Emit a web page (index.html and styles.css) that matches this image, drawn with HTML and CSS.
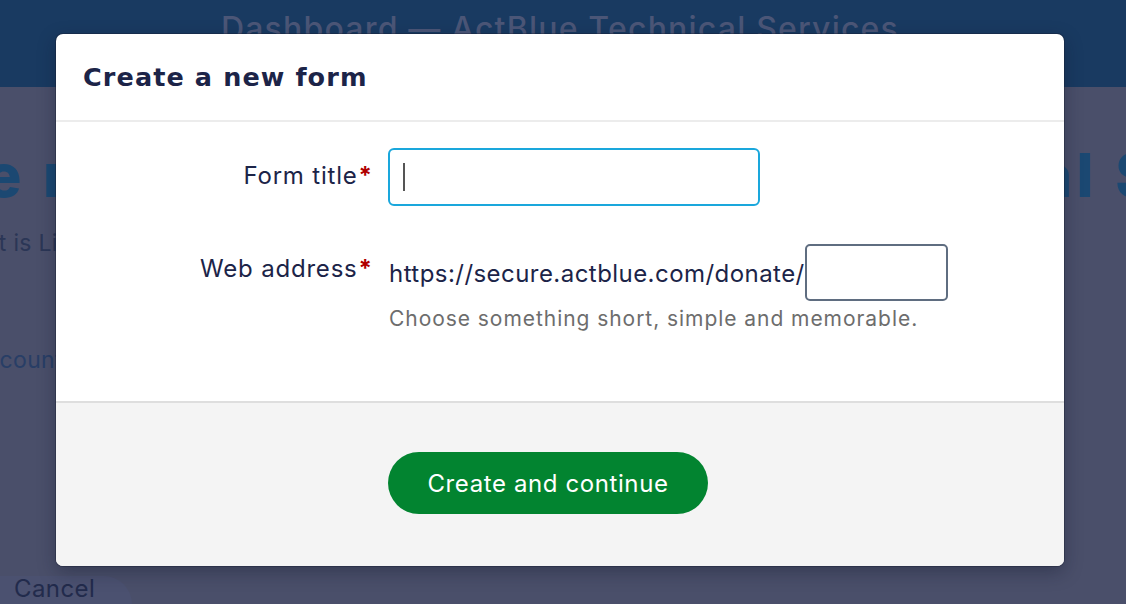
FILE: index.html
```html
<!DOCTYPE html>
<html lang="en">
<head>
<meta charset="utf-8">
<title>Create a new form</title>
<link rel="stylesheet" href="styles.css">
</head>
<body>
<div class="page">
  <header class="topbar">
    <div class="topbar-title">Dashboard — ActBlue Technical Services</div>
  </header>
  <main class="bg-content">
    <h1 class="bg-heading">Create new form for ActBlue Technical Services</h1>
    <p class="bg-text">Your account is Live and ready to accept contributions.</p>
    <p class="bg-link">Account settings can be changed at any time.</p>
    <div class="bg-spacer"></div>
    <div class="bg-cancel">Cancel</div>
  </main>
</div>

<div class="modal" role="dialog" aria-labelledby="modal-title">
  <div class="modal-header">
    <h2 id="modal-title" class="modal-title">Create a new form</h2>
  </div>
  <div class="modal-body">
    <div class="field-row">
      <label class="field-label" for="title">Form title<span class="req">*</span></label>
      <div class="field-control">
        <div class="text-input focused"><span class="caret"></span></div>
      </div>
    </div>
    <div class="field-row field-row-web">
      <label class="field-label" for="slug">Web address<span class="req">*</span></label>
      <div class="field-control">
        <div class="url-line">
          <span class="url-prefix">https://secure.actblue.com/donate/</span>
          <div class="slug-input"></div>
        </div>
        <div class="help">Choose something short, simple and memorable.</div>
      </div>
    </div>
  </div>
  <div class="modal-footer">
    <button class="btn-primary" type="button">Create and continue</button>
  </div>
</div>
</body>
</html>
```

FILE: styles.css
```css
* { box-sizing: border-box; }

html, body {
  margin: 0;
  height: 100%;
}

body {
  background: #4a4f6a;
  font-family: Inter, "Noto Sans", sans-serif;
  overflow: hidden;
  width: 1126px;
  height: 604px;
  position: relative;
}

.page {
  height: 604px;
  display: flex;
  flex-direction: column;
  overflow: hidden;
}

.topbar {
  height: 87px;
  background: #193a61;
  display: flex;
  justify-content: center;
  flex-shrink: 0;
}

.topbar-title {
  margin-top: 9px;
  margin-left: -6px;
  font-family: Inter, sans-serif;
  font-size: 32px;
  font-weight: 500;
  color: #4b5677;
  letter-spacing: 1.2px;
  white-space: nowrap;
}

.bg-content {
  flex: 1;
  display: flex;
  flex-direction: column;
  overflow: hidden;
}

.bg-heading {
  margin: 52px 0 0 -198px;
  font-family: Inter, sans-serif;
  font-weight: 800;
  font-size: 60px;
  line-height: 72px;
  color: #1b4872;
  white-space: nowrap;
  letter-spacing: 4.2px;
  word-spacing: 0;
}

.bg-text {
  margin: 18px 0 0 -141px;
  font-size: 23px;
  color: #2b3656;
  white-space: nowrap;
  letter-spacing: 0.3px;
}

.bg-link {
  margin: 89px 0 0 -30px;
  font-size: 23px;
  color: #283e66;
  white-space: nowrap;
  letter-spacing: 0.3px;
}

.bg-spacer {
  flex: 1;
}

.bg-cancel {
  width: 132px;
  height: 28px;
  padding-left: 14px;
  font-size: 24px;
  color: #222b4c;
  line-height: 26px;
  background: #4b5170;
  border-top-right-radius: 30px;
  letter-spacing: 0.4px;
}

.modal {
  position: absolute;
  left: 56px;
  top: 34px;
  width: 1008px;
  height: 532px;
  background: #fff;
  border-radius: 7px;
  box-shadow: 0 0 0 1px rgba(20, 25, 45, 0.35), 0 6px 18px rgba(15, 20, 40, 0.35);
  display: flex;
  flex-direction: column;
  overflow: hidden;
}

.modal-header {
  height: 88px;
  padding: 28px 27px 0;
  border-bottom: 2px solid #ececec;
  flex-shrink: 0;
}

.modal-title {
  margin: 0;
  font-family: "DejaVu Sans", Inter, sans-serif;
  font-weight: 700;
  font-size: 25.5px;
  line-height: 30px;
  color: #1c2448;
  letter-spacing: 1.1px;
}

.modal-body {
  height: 279px;
  padding-top: 26px;
  display: flex;
  flex-direction: column;
  gap: 38px;
  flex-shrink: 0;
}

.field-row {
  display: flex;
  align-items: flex-start;
  gap: 16px;
}

.field-label {
  width: 316px;
  flex-shrink: 0;
  text-align: right;
  font-size: 24px;
  color: #1c2448;
  line-height: 56px;
  letter-spacing: 0.8px;
}

.field-row-web .field-label {
  line-height: 50px;
}

.req {
  color: #b00000;
  font-weight: 700;
  margin-left: 1px;
  letter-spacing: 0;
}

.text-input {
  width: 372px;
  height: 58px;
  border: 2px solid #1aa7dc;
  border-radius: 6px;
  display: flex;
  align-items: center;
  padding-left: 13px;
}

.caret {
  width: 2px;
  height: 28px;
  background: #555;
}

.url-line {
  display: flex;
  align-items: center;
}

.url-prefix {
  font-size: 24px;
  color: #1c2448;
  letter-spacing: 0.45px;
  margin-left: 1px;
  margin-top: 1px;
}

.slug-input {
  width: 143px;
  height: 57px;
  border: 2px solid #5f6d80;
  border-radius: 5px;
}

.help {
  margin-top: 5px;
  margin-left: 1px;
  font-size: 21px;
  color: #6d6d6d;
  letter-spacing: 0.95px;
}

.modal-footer {
  flex: 1;
  background: #f4f4f4;
  border-top: 2px solid #dedede;
  padding-top: 49px;
  padding-left: 332px;
}

.btn-primary {
  width: 320px;
  height: 62px;
  border: none;
  border-radius: 31px;
  background: #028430;
  color: #fff;
  font-family: Inter, sans-serif;
  font-size: 24px;
  font-weight: 400;
  letter-spacing: 0.6px;
  cursor: pointer;
}
```
